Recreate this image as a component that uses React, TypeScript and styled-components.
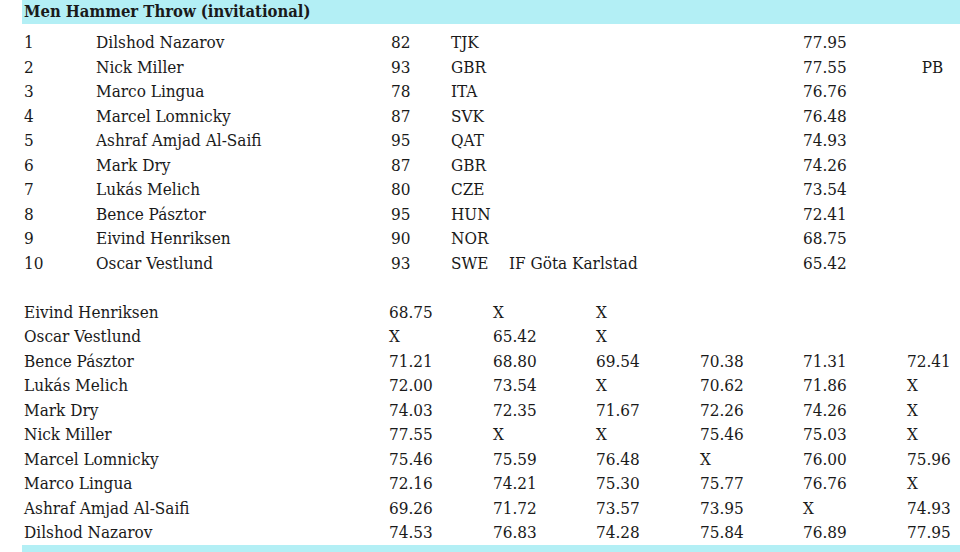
import styled, { createGlobalStyle } from "styled-components";

const GlobalStyle = createGlobalStyle`
  html, body {
    margin: 0;
    padding: 0;
    background: #ffffff;
  }
  body {
    font-family: "DejaVu Serif", "Liberation Serif", serif;
    font-stretch: condensed;
    font-size: 17px;
    color: #1a1a1a;
    overflow: hidden;
  }
`;

const results = [
  ["1", "Dilshod Nazarov", "82", "TJK", "", "77.95", ""],
  ["2", "Nick Miller", "93", "GBR", "", "77.55", "PB"],
  ["3", "Marco Lingua", "78", "ITA", "", "76.76", ""],
  ["4", "Marcel Lomnicky", "87", "SVK", "", "76.48", ""],
  ["5", "Ashraf Amjad Al-Saifi", "95", "QAT", "", "74.93", ""],
  ["6", "Mark Dry", "87", "GBR", "", "74.26", ""],
  ["7", "Lukás Melich", "80", "CZE", "", "73.54", ""],
  ["8", "Bence Pásztor", "95", "HUN", "", "72.41", ""],
  ["9", "Eivind Henriksen", "90", "NOR", "", "68.75", ""],
  ["10", "Oscar Vestlund", "93", "SWE", "IF Göta Karlstad", "65.42", ""],
];

const series = [
  ["Eivind Henriksen", "68.75", "X", "X", "", "", ""],
  ["Oscar Vestlund", "X", "65.42", "X", "", "", ""],
  ["Bence Pásztor", "71.21", "68.80", "69.54", "70.38", "71.31", "72.41"],
  ["Lukás Melich", "72.00", "73.54", "X", "70.62", "71.86", "X"],
  ["Mark Dry", "74.03", "72.35", "71.67", "72.26", "74.26", "X"],
  ["Nick Miller", "77.55", "X", "X", "75.46", "75.03", "X"],
  ["Marcel Lomnicky", "75.46", "75.59", "76.48", "X", "76.00", "75.96"],
  ["Marco Lingua", "72.16", "74.21", "75.30", "75.77", "76.76", "X"],
  ["Ashraf Amjad Al-Saifi", "69.26", "71.72", "73.57", "73.95", "X", "74.93"],
  ["Dilshod Nazarov", "74.53", "76.83", "74.28", "75.84", "76.89", "77.95"],
];

export default function App() {
  return (
    <Sheet>
      <GlobalStyle />
      <TitleBar>Men Hammer Throw (invitational)</TitleBar>
      <ResultGrid>
        {results.map((r) =>
          r.map((cell, i) => (
            <Cell key={r[0] + i} $center={i === 6}>
              {cell}
            </Cell>
          ))
        )}
      </ResultGrid>
      <BlankRow />
      <SeriesGrid>
        {series.map((r) =>
          r.map((cell, i) => <Cell key={r[0] + i}>{cell}</Cell>)
        )}
      </SeriesGrid>
      <TitleBar />
    </Sheet>
  );
}

const Sheet = styled.div`
  width: 960px;
  height: 552px;
  overflow: hidden;
  display: flex;
  flex-direction: column;
`;

const TitleBar = styled.div`
  margin-left: 22px;
  height: 24px;
  min-height: 24px;
  line-height: 24px;
  padding-left: 2px;
  background-color: #b3eff5;
  font-size: 16.5px;
  font-weight: bold;
  white-space: nowrap;
`;

const ResultGrid = styled.div`
  margin-top: 6px;
  margin-left: 22px;
  display: grid;
  grid-template-columns: 72px 295px 60px 58px 294px 104px 55px;
  grid-auto-rows: 24.5px;
`;

const SeriesGrid = styled.div`
  margin-left: 22px;
  display: grid;
  grid-template-columns: 365px 104px 103px 104px 103px 104px 55px;
  grid-auto-rows: 24.5px;
  margin-bottom: 0.5px;
`;

const BlankRow = styled.div`
  height: 24.5px;
  min-height: 24.5px;
`;

const Cell = styled.div<{ $center?: boolean }>`
  padding-left: ${(p) => (p.$center ? "0" : "2px")};
  text-align: ${(p) => (p.$center ? "center" : "left")};
  line-height: 24.5px;
  white-space: nowrap;
`;
